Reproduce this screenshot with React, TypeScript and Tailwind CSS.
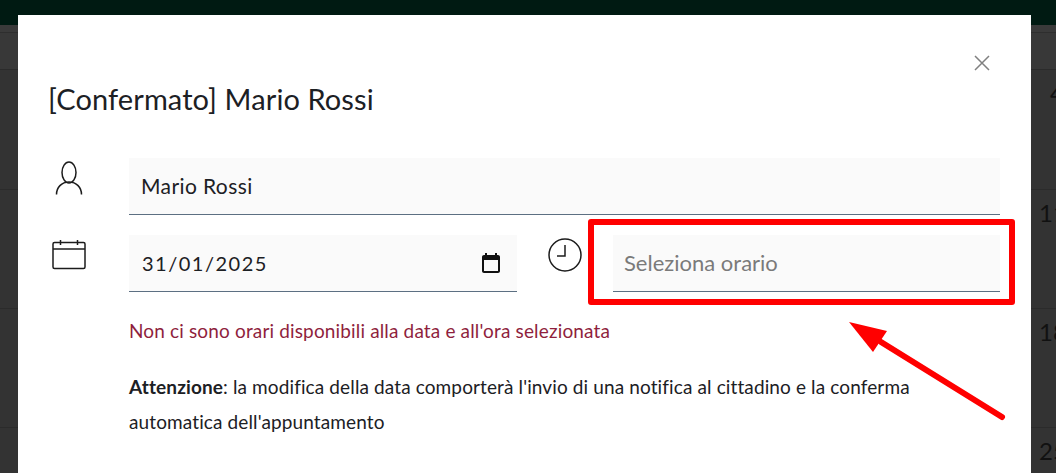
export default function App() {
  const rows = [
    { h: "h-[37px]", text: "", cls: "bg-[#383838]" },
    { h: "h-[120px]", text: "4", cls: "pl-[1050px]" },
    { h: "h-[119px]", text: "11", cls: "pl-[1039px]" },
    { h: "h-[119px]", text: "18", cls: "pl-[1039px]" },
    { h: "h-[60px]", text: "25", cls: "pl-[1039px]" },
  ];
  return (
    <div className="relative h-[473px] w-[1056px] overflow-hidden bg-[#333333] font-['Lato','Noto_Sans',sans-serif]">
      <div className="h-[25px] bg-[#001a12]" />
      <div className="h-[8px] border-b border-[#2e2e2e] bg-[#3a3a3a]" />
      {rows.map((r, i) => (
        <div key={i} className={`${r.h} ${r.cls} border-b border-[#2b2b2b] pt-[8px] text-[24px] leading-[30px] text-[#111111] whitespace-nowrap`}>
          {r.text}
        </div>
      ))}

      <div className="absolute left-[18px] top-[15px] h-[458px] w-[1013px] bg-white px-[31px] text-[#1c2024]">
        <button className="absolute right-[41px] top-[40px] text-[#808080]">
          <svg width="16" height="16" viewBox="0 0 16 16" fill="none" stroke="currentColor" strokeWidth="1.5">
            <path d="M1 1l14 14M15 1L1 15" />
          </svg>
        </button>

        <h2 className="-ml-px pt-[66px] text-[29px] font-normal leading-[36px] tracking-[0.1px]">[Confermato] Mario Rossi</h2>

        <div className="mt-[41px] flex">
          <div className="w-[80px] pl-[6px] pt-[3px]">
            <svg width="28" height="34" viewBox="0 0 28 34" fill="none" stroke="#1c1c1c" strokeWidth="1.5">
              <ellipse cx="14" cy="11.5" rx="7" ry="10.5" />
              <path d="M1.500 33.500c0-7 5-12.500 12.500-12.500s12.500 5.500 12.500 12.500" />
            </svg>
          </div>
          <div className="flex h-[57px] flex-1 items-center border-b border-[#5c6f82] bg-[#fafafa] px-3 text-[21px] tracking-[0.4px]">Mario Rossi</div>
        </div>

        <div className="mt-[20px] flex">
          <div className="w-[80px] pl-[3px] pt-[5px]">
            <svg width="34" height="30" viewBox="0 0 34 30" fill="none" stroke="#1c1c1c" strokeWidth="1.5">
              <rect x="1" y="2.500" width="32" height="26" rx="1.5" />
              <path d="M1 9h32M8.500 0v5M25.500 0v5" />
            </svg>
          </div>
          <div className="flex h-[57px] w-[388px] items-center justify-between border-b border-[#5c6f82] bg-[#fafafa] pl-[13px] pr-[14px] text-[20px] tracking-[1.5px]">
            <span>31/01/2025</span>
            <svg width="24" height="24" viewBox="0 0 24 24" fill="#111111">
              <path d="M19 4h-1V2h-2v2H8V2H6v2H5c-1.100 0-2 .9-2 2v14c0 1.100.9 2 2 2h14c1.100 0 2-.9 2-2V6c0-1.100-.9-2-2-2zm0 16H5V9h14v11z" />
            </svg>
          </div>
          <div className="w-[96px] pl-[31px] pt-[3px]">
            <svg width="34" height="34" viewBox="0 0 34 34" fill="none" stroke="#1c1c1c" strokeWidth="1.5">
              <circle cx="17" cy="17" r="16" />
              <path d="M17 7v11H9" />
            </svg>
          </div>
          <div className="flex h-[57px] flex-1 items-center border-b border-[#5c6f82] bg-[#fafafa] px-[11px] pb-[2px] text-[22px] text-[#7a7a7a]">Seleziona orario</div>
        </div>

        <p className="ml-[80px] mt-[25px] text-[19px] leading-[27px] tracking-[0.15px] text-[#8f1f3d]">Non ci sono orari disponibili alla data e all'ora selezionata</p>

        <p className="ml-[80px] mt-[25px] w-[800px] text-[19px] leading-[35px] tracking-[0.12px]">
          <strong className="font-bold">Attenzione</strong>: la modifica della data comporterà l'invio di una notifica al cittadino e la conferma automatica dell'appuntamento
        </p>
      </div>

      <div className="absolute left-[588px] top-[219px] h-[86px] w-[427px] rounded-[3px] border-[6px] border-[#ff0000]" />
      <svg className="absolute left-[845px] top-[318px]" width="165" height="105" viewBox="0 0 165 105" fill="none">
        <path d="M157 99L36 24" stroke="#ff0000" strokeWidth="6" strokeLinecap="round" />
        <path d="M4 4L42 13L28 34Z" fill="#ff0000" />
      </svg>
    </div>
  );
}
